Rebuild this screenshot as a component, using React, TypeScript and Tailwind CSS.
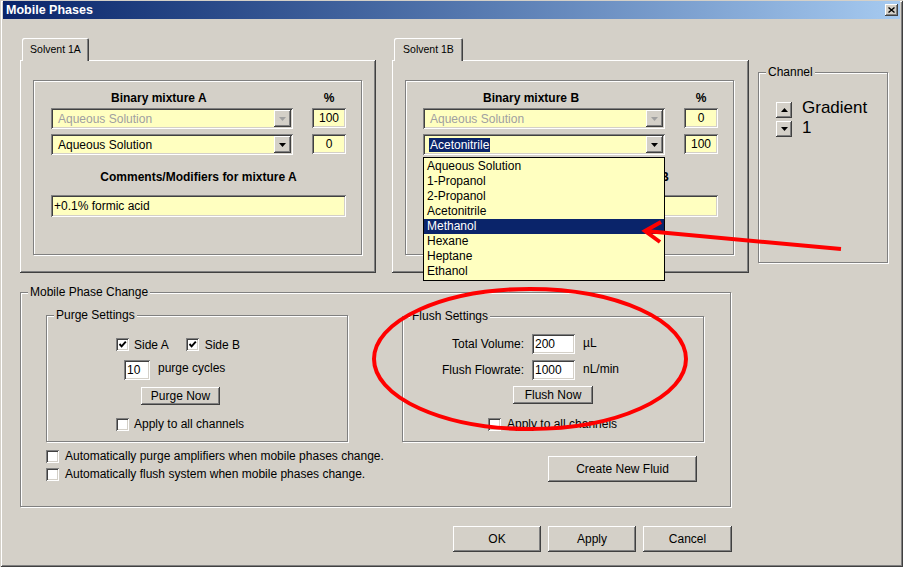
import React from "react";

// classic 3D edges
const RAISED =
  "shadow-[inset_-1px_-1px_0_#404040,inset_1px_1px_0_#ffffff,inset_-2px_-2px_0_#808080,inset_2px_2px_0_#d4d0c8]";
const SUNKEN =
  "shadow-[inset_1px_1px_0_#808080,inset_-1px_-1px_0_#ffffff,inset_2px_2px_0_#404040,inset_-2px_-2px_0_#d4d0c8]";
const ETCHED =
  "border border-[#808080] shadow-[1px_1px_0_#ffffff,inset_1px_1px_0_#ffffff]";

const OPTIONS = [
  "Aqueous Solution",
  "1-Propanol",
  "2-Propanol",
  "Acetonitrile",
  "Methanol",
  "Hexane",
  "Heptane",
  "Ethanol",
];

function Tri({ up = false, color = "#000000" }: { up?: boolean; color?: string }) {
  return (
    <svg width="7" height="4" viewBox="0 0 7 4">
      <path d={up ? "M0 4H7L3.5 0Z" : "M0 0H7L3.5 4Z"} fill={color} />
    </svg>
  );
}

function Btn({ children, className }: { children: React.ReactNode; className: string }) {
  return (
    <button type="button" className={`flex items-center justify-center bg-[#d4d0c8] text-[12px] ${RAISED} ${className}`}>
      {children}
    </button>
  );
}

function Check({ checked = false }: { checked?: boolean }) {
  return (
    <div className={`flex h-[13px] w-[13px] shrink-0 items-center justify-center bg-white ${SUNKEN}`}>
      {checked && (
        <svg width="9" height="9" viewBox="0 0 9 9">
          <path d="M1.5 4 L3.6 6.3 L7.8 1.6" fill="none" stroke="#000" strokeWidth="1.9" />
        </svg>
      )}
    </div>
  );
}

function Group({ label, className, children }: { label: string; className: string; children?: React.ReactNode }) {
  return (
    <div className={`relative ${ETCHED} ${className}`}>
      <span className="absolute left-[7px] top-[-8px] bg-[#d4d0c8] px-[2px] text-[12px] leading-[14px]">{label}</span>
      {children}
    </div>
  );
}

type ComboProps = { value: string; disabled?: boolean; selected?: boolean; open?: boolean };

function Combo({ value, disabled, selected, open }: ComboProps) {
  return (
    <div className={`relative flex h-[21px] w-[242px] items-center bg-[#ffffc0] p-[2px] ${SUNKEN}`}>
      <div className={`flex-1 pl-[5px] text-[12px] leading-[14px] ${disabled ? "text-[#a0a0a0]" : "text-black"}`}>
        {selected ? <span className="-ml-[1px] bg-[#0a246a] px-[1px] text-white">{value}</span> : value}
      </div>
      <div className={`flex h-[17px] w-[17px] items-center justify-center bg-[#d4d0c8] ${RAISED}`}>
        <Tri color={disabled ? "#a0a0a0" : "#000000"} />
      </div>
      {open && (
        <div className="absolute left-0 top-[23px] z-20 w-[242px] border border-black bg-[#ffffc0] py-[1px]">
          {OPTIONS.map((o) => (
            <div
              key={o}
              className={`h-[15px] pl-[3px] text-[12px] leading-[15px] ${o === "Methanol" ? "bg-[#0a246a] text-white" : "text-black"}`}
            >
              {o}
            </div>
          ))}
        </div>
      )}
    </div>
  );
}

function Pct({ children }: { children: React.ReactNode }) {
  return (
    <div className={`flex h-[20px] w-[34px] items-center justify-center bg-[#ffffc0] text-[12px] ${SUNKEN}`}>
      {children}
    </div>
  );
}

type SolventProps = {
  tab: string;
  tabClass: string;
  panelClass: string;
  letter: string;
  pctTop: string;
  pctBottom: string;
  second: string;
  comment: string;
  open?: boolean;
};

function SolventTab({ tab, tabClass, panelClass, letter, pctTop, pctBottom, second, comment, open }: SolventProps) {
  return (
    <div className="flex flex-col">
      <div className="flex h-[22px]">
        <div
          className={`relative z-10 -mb-[1px] ml-[2px] flex items-center justify-center rounded-t-[2px] bg-[#d4d0c8] text-[10.5px] shadow-[inset_1px_1px_0_#ffffff,inset_-1px_0_0_#404040,inset_-2px_0_0_#808080] ${tabClass}`}
        >
          {tab}
        </div>
      </div>
      <div className={`h-[213px] bg-[#d4d0c8] pl-[13px] pt-[20px] ${RAISED} ${panelClass}`}>
        <div className={`h-[175px] w-[329px] ${ETCHED}`}>
          <div className="pl-[17px] pt-[10px]">
            <div className="flex text-[12px] font-bold leading-[14px]">
              <div className="w-[242px] pl-[60px]">Binary mixture {letter}</div>
              <div className="ml-[19px] w-[34px] text-center">%</div>
            </div>
            <div className="mt-[3px] flex gap-[19px]">
              <Combo value="Aqueous Solution" disabled />
              <Pct>{pctTop}</Pct>
            </div>
            <div className="mt-[5px] flex gap-[19px]">
              <Combo value={second} selected={open} open={open} />
              <Pct>{pctBottom}</Pct>
            </div>
            <div className="mt-[15px] w-[295px] text-center text-[12px] font-bold leading-[14px]">
              Comments/Modifiers for mixture {letter}
            </div>
            <div className={`mt-[11px] flex h-[22px] w-[295px] items-center bg-[#ffffc0] pl-[3px] text-[12px] ${SUNKEN}`}>
              {comment}
            </div>
          </div>
        </div>
      </div>
    </div>
  );
}

export default function App() {
  return (
    <div
      className="relative h-[567px] w-[903px] overflow-hidden bg-[#d4d0c8] px-[3px] pt-[1px] text-black shadow-[inset_1px_1px_0_#d4d0c8,inset_-1px_-1px_0_#404040,inset_2px_2px_0_#ffffff,inset_-2px_-2px_0_#808080]"
      style={{ fontFamily: '"Liberation Sans", Arial, sans-serif' }}
    >
      {/* title bar */}
      <div className="flex h-[18px] items-center justify-between bg-linear-to-r from-[#0a246a] to-[#a6caf0] pl-[3px] pr-[2px]">
        <span className="text-[12.5px] font-bold text-white">Mobile Phases</span>
        <div className={`flex h-[12px] w-[13px] items-center justify-center bg-[#d4d0c8] ${RAISED}`}>
          <svg width="7" height="6" viewBox="0 0 7 6">
            <path d="M0.5 0.5 L6.5 5.5 M6.5 0.5 L0.5 5.5" stroke="#000" strokeWidth="1.4" />
          </svg>
        </div>
      </div>

      <div className="ml-[17px] mt-[19px]">
        {/* top row */}
        <div className="flex">
          <SolventTab
            tab="Solvent 1A"
            tabClass="w-[67px]"
            panelClass="w-[356px]"
            letter="A"
            pctTop="100"
            pctBottom="0"
            second="Aqueous Solution"
            comment="+0.1% formic acid"
          />
          <div className="ml-[16px]">
            <SolventTab
              tab="Solvent 1B"
              tabClass="w-[69px]"
              panelClass="w-[357px]"
              letter="B"
              pctTop="0"
              pctBottom="100"
              second="Acetonitrile"
              comment=""
              open
            />
          </div>
          <Group label="Channel" className="ml-[9px] mt-[34px] h-[191px] w-[130px]">
            <div className="flex items-start pl-[17px] pt-[29px]">
              <div className="flex flex-col gap-[3px]">
                <div className={`flex h-[16px] w-[16px] items-center justify-center bg-[#d4d0c8] ${RAISED}`}>
                  <Tri up />
                </div>
                <div className={`flex h-[16px] w-[16px] items-center justify-center bg-[#d4d0c8] ${RAISED}`}>
                  <Tri />
                </div>
              </div>
              <div className="-mt-[4px] ml-[10px] text-[17px] leading-[20px]">
                Gradient
                <br />1
              </div>
            </div>
          </Group>
        </div>

        {/* mobile phase change */}
        <Group label="Mobile Phase Change" className="mt-[19px] h-[215px] w-[711px]">
          <div className="pl-[25px] pt-[22px]">
            <div className="flex items-start">
              <Group label="Purge Settings" className="h-[127px] w-[302px]">
                <div className="pl-[69px] pt-[22px] text-[12px]">
                  <div className="flex h-[13px] items-center">
                    <Check checked />
                    <span className="ml-[5px]">Side A</span>
                    <span className="ml-[17px]">
                      <Check checked />
                    </span>
                    <span className="ml-[6px]">Side B</span>
                  </div>
                  <div className="ml-[8px] mt-[9px] flex items-center">
                    <div className={`flex h-[20px] w-[26px] items-center bg-white pl-[3px] ${SUNKEN}`}>10</div>
                    <span className="ml-[8px] -mt-[4px]">purge cycles</span>
                  </div>
                  <Btn className="ml-[25px] mt-[7px] h-[18px] w-[79px]">Purge Now</Btn>
                  <div className="mt-[10px] flex items-center">
                    <Check />
                    <span className="ml-[5px]">Apply to all channels</span>
                  </div>
                </div>
              </Group>
              <Group label="Flush Settings" className="ml-[54px] mt-[1px] h-[126px] w-[302px]">
                <div className="pt-[17px] text-[12px]">
                  <div className="flex h-[20px] items-center">
                    <span className="w-[121px] text-right">Total Volume:</span>
                    <div className={`ml-[8px] flex h-[20px] w-[43px] items-center bg-white pl-[3px] ${SUNKEN}`}>200</div>
                    <span className="ml-[8px] -mt-[2px]">µL</span>
                  </div>
                  <div className="mt-[6px] flex h-[20px] items-center">
                    <span className="w-[121px] text-right">Flush Flowrate:</span>
                    <div className={`ml-[8px] flex h-[20px] w-[43px] items-center bg-white pl-[3px] ${SUNKEN}`}>1000</div>
                    <span className="ml-[8px] -mt-[2px]">nL/min</span>
                  </div>
                  <Btn className="ml-[110px] mt-[6px] h-[18px] w-[80px]">Flush Now</Btn>
                  <div className="ml-[85px] mt-[11px] flex items-center">
                    <Check />
                    <span className="ml-[6px]">Apply to all channels</span>
                  </div>
                </div>
              </Group>
            </div>

            <div className="mt-[5px] flex items-start">
              <div className="w-[502px] text-[12px]">
                <div className="flex h-[18px] items-center">
                  <Check />
                  <span className="ml-[6px]">Automatically purge amplifiers when mobile phases change.</span>
                </div>
                <div className="flex h-[18px] items-center">
                  <Check />
                  <span className="ml-[6px]">Automatically flush system when mobile phases change.</span>
                </div>
              </div>
              <Btn className="mt-[9px] h-[26px] w-[149px]">Create New Fluid</Btn>
            </div>
          </div>
        </Group>

        {/* dialog buttons */}
        <div className="ml-[433px] mt-[19px] flex gap-[7px]">
          <Btn className="h-[26px] w-[88px]">OK</Btn>
          <Btn className="h-[26px] w-[88px]">Apply</Btn>
          <Btn className="h-[26px] w-[89px]">Cancel</Btn>
        </div>
      </div>

      {/* red annotations drawn over the screenshot */}
      <svg className="pointer-events-none absolute inset-0 z-30" width="903" height="567" viewBox="0 0 903 567">
        <ellipse cx="530" cy="359" rx="156" ry="70" fill="none" stroke="#f00" strokeWidth="4" />
        <line x1="646" y1="231" x2="841" y2="249" stroke="#f00" strokeWidth="4" />
        <polyline points="661,222 645,231 660,242" fill="none" stroke="#f00" strokeWidth="4" strokeLinejoin="miter" />
      </svg>
    </div>
  );
}
